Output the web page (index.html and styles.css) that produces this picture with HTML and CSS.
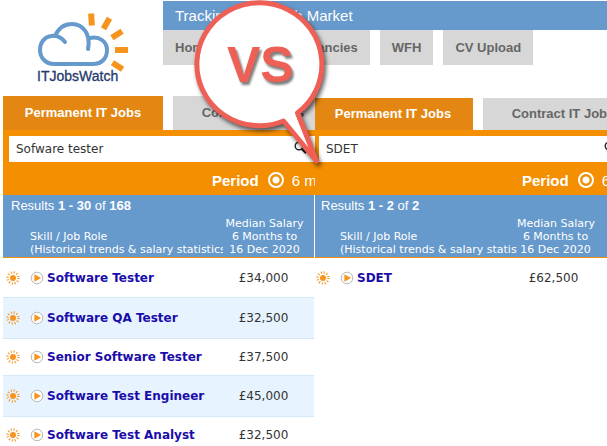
FILE: index.html
```html
<!DOCTYPE html>
<html lang="en">
<head>
    <meta charset="UTF-8">
    <meta name="viewport" content="width=device-width, initial-scale=1.0">
    <title>ITJobsWatch - Software Tester vs SDET</title>
    <link rel="stylesheet" href="styles.css">
</head>
<body>
    <!-- Shared icons -->
    <svg class="icon-defs" aria-hidden="true">
        <symbol id="sun" viewBox="0 0 14 14">
            <circle cx="7" cy="7" r="3" fill="#f7941d"/>
            <circle cx="7" cy="7" r="5.5" fill="none" stroke="#f7941d" stroke-width="2.4" stroke-dasharray="1 1.88"/>
        </symbol>
        <symbol id="play" viewBox="0 0 14 14">
            <circle cx="7" cy="7" r="5.8" fill="#fff" stroke="#b9b9b9" stroke-width="1"/>
            <path d="M4.400 3.200v7.600L11 7z" fill="#f7941d"/>
        </symbol>
        <symbol id="search" viewBox="0 0 14 14">
            <circle cx="5" cy="5" r="3.8" fill="none" stroke="#222" stroke-width="1.4"/>
            <path d="M7.8 7.8l4.4 4.4" stroke="#222" stroke-width="2.4"/>
        </symbol>
    </svg>

    <div class="page">
        <header class="header">
            <a class="logo" href="#" aria-label="ITJobsWatch">
                <svg width="110" height="80" viewBox="30 8 110 80">
                    <g fill="none" stroke="#6699cc" stroke-width="4" stroke-linecap="round">
                        <path d="M65 42C61 37 56 35 51 36C44 37 40 43 40 50C40 58 46 64 54 64H93C102 64 107 58 107 50C107 42 100 36 90 38"/>
                        <path d="M55 36C59 27 65 24 72 24C83 24 91 34 88 49"/>
                    </g>
                    <g fill="#f7941d">
                        <rect x="-3" y="-6" width="6" height="12" transform="translate(91.500 19.500) rotate(-4)"/>
                        <rect x="-3" y="-6" width="6" height="12" transform="translate(106.500 23.500) rotate(30)"/>
                        <rect x="-3" y="-6" width="6" height="12" transform="translate(117 34.500) rotate(58)"/>
                        <rect x="-3" y="-6" width="6" height="13" transform="translate(122 50) rotate(90)"/>
                        <rect x="-3" y="-6" width="6" height="12" transform="translate(117.500 66) rotate(122)"/>
                    </g>
                    <text class="logo-text" x="37" y="81">ITJobsWatch</text>
                </svg>
            </a>
            <div class="header-main">
                <h1 class="tagline">Tracking the IT Job Market</h1>
                <nav class="nav">
                    <a class="nav-link nav-home" href="#">Home</a>
                    <a class="nav-link" href="#">IT Job Vacancies</a>
                    <a class="nav-link" href="#">WFH</a>
                    <a class="nav-link" href="#">CV Upload</a>
                </nav>
            </div>
        </header>

        <main class="compare">
            <section class="pane">
                <div class="pane-inner">
                    <nav class="tabs">
                        <a class="tab active" href="#">Permanent IT Jobs</a>
                        <a class="tab" href="#">Contract IT Jobs</a>
                    </nav>
                    <form class="search">
                        <div class="search-box">
                            <input class="search-input" type="text" value="Sofware tester" aria-label="Search">
                            <button class="search-btn" type="button" aria-label="Go"><svg width="14" height="14"><use href="#search"/></svg></button>
                        </div>
                        <div class="period">
                            <b>Period</b>
                            <label class="period-option"><input class="radio" type="radio" name="period" checked>6 months</label>
                        </div>
                    </form>
                    <div class="results">
                        <p class="results-count">Results <b>1 - 30</b> of <b>168</b></p>
                        <table class="jobs">
                            <thead>
                                <tr>
                                    <th class="skill">Skill / Job Role<br>(Historical trends &amp; salary statistics)</th>
                                    <th class="salary">Median Salary<br>6 Months to<br>16 Dec 2020</th>
                                </tr>
                            </thead>
                            <tbody>
                                <tr>
                                    <td class="skill"><div class="role"><svg class="sun"><use href="#sun"/></svg><svg class="play"><use href="#play"/></svg><a href="#">Software Tester</a></div></td>
                                    <td class="salary">£34,000</td>
                                </tr>
                                <tr>
                                    <td class="skill"><div class="role"><svg class="sun"><use href="#sun"/></svg><svg class="play"><use href="#play"/></svg><a href="#">Software QA Tester</a></div></td>
                                    <td class="salary">£32,500</td>
                                </tr>
                                <tr>
                                    <td class="skill"><div class="role"><svg class="sun"><use href="#sun"/></svg><svg class="play"><use href="#play"/></svg><a href="#">Senior Software Tester</a></div></td>
                                    <td class="salary">£37,500</td>
                                </tr>
                                <tr>
                                    <td class="skill"><div class="role"><svg class="sun"><use href="#sun"/></svg><svg class="play"><use href="#play"/></svg><a href="#">Software Test Engineer</a></div></td>
                                    <td class="salary">£45,000</td>
                                </tr>
                                <tr>
                                    <td class="skill"><div class="role"><svg class="sun"><use href="#sun"/></svg><svg class="play"><use href="#play"/></svg><a href="#">Software Test Analyst</a></div></td>
                                    <td class="salary">£32,500</td>
                                </tr>
                            </tbody>
                        </table>
                    </div>
                </div>
            </section>

            <section class="pane pane-right">
                <div class="pane-inner">
                    <nav class="tabs">
                        <a class="tab active" href="#">Permanent IT Jobs</a>
                        <a class="tab" href="#">Contract IT Jobs</a>
                    </nav>
                    <form class="search">
                        <div class="search-box">
                            <input class="search-input" type="text" value="SDET" aria-label="Search">
                            <button class="search-btn" type="button" aria-label="Go"><svg width="14" height="14"><use href="#search"/></svg></button>
                        </div>
                        <div class="period">
                            <b>Period</b>
                            <label class="period-option"><input class="radio" type="radio" name="period" checked>6 months</label>
                        </div>
                    </form>
                    <div class="results">
                        <p class="results-count">Results <b>1 - 2</b> of <b>2</b></p>
                        <table class="jobs">
                            <thead>
                                <tr>
                                    <th class="skill">Skill / Job Role<br>(Historical trends &amp; salary statistics)</th>
                                    <th class="salary">Median Salary<br>6 Months to<br>16 Dec 2020</th>
                                </tr>
                            </thead>
                            <tbody>
                                <tr>
                                    <td class="skill"><div class="role"><svg class="sun"><use href="#sun"/></svg><svg class="play"><use href="#play"/></svg><a href="#">SDET</a></div></td>
                                    <td class="salary">£62,500</td>
                                </tr>
                            </tbody>
                        </table>
                    </div>
                </div>
            </section>
        </main>

        <!-- Speech bubble over both panes -->
        <svg class="bubble" width="140" height="176" viewBox="190 -4 140 176">
            <path class="bubble-shape" d="M283.500 121A62.500 61.500 0 1 1 297.500 113L316.500 161Z"/>
            <text class="bubble-text" x="227" y="82">VS</text>
        </svg>
    </div>
</body>
</html>
```
FILE: styles.css
```css
:root {
    --blue: #6699cc;
    --orange: #f38f00;
    --tab-orange: #e38612;
    --grey: #d7d7d7;
    --grey-text: #666;
    --link: #1a0dab;
    --stripe: #e7f3fe;
    --red: #ee6055;
    --font-main: "Liberation Sans", Arial, sans-serif;
    --font-data: "DejaVu Sans", Verdana, sans-serif;
}

* {
    margin: 0;
    padding: 0;
    box-sizing: border-box;
}

body {
    height: 100vh;
    overflow: hidden;
    background: #fff;
    color: #333;
    font-family: var(--font-main);
    font-size: 13px;
}

a {
    text-decoration: none;
}

.icon-defs {
    display: none;
}

.page {
    position: relative;
    padding: 1px 0 0 3px;
}

/* Header */
.header {
    display: flex;
    height: 95px;
}

.logo {
    flex: 0 0 160px;
    padding: 7px 0 0 27px;
}

.logo-text {
    font-size: 14px;
    fill: #253a6e;
    stroke: #253a6e;
    stroke-width: 0.3px;
}

.header-main {
    flex: 1;
    min-width: 0;
}

.tagline {
    padding-left: 12px;
    background: var(--blue);
    color: #fff;
    font-size: 15px;
    font-weight: normal;
    line-height: 29px;
    white-space: nowrap;
}

.nav {
    display: flex;
    gap: 10px;
}

.nav-link {
    padding: 0 12px;
    background: var(--grey);
    color: var(--grey-text);
    font-weight: bold;
    line-height: 35px;
    white-space: nowrap;
}

.nav-home {
    min-width: 68px;
}

/* Side by side searches */
.compare {
    display: grid;
    grid-template-columns: 312px minmax(0, 1fr);
}

.pane {
    overflow: hidden;
}

.pane-inner {
    min-width: 312px;
}

.pane-right .pane-inner {
    margin-left: -2px;
}

.tabs {
    display: flex;
    gap: 10px;
}

.tab {
    flex: 0 0 160px;
    background: var(--grey);
    color: var(--grey-text);
    font-weight: bold;
    line-height: 34px;
    text-align: center;
    white-space: nowrap;
}

.tab.active {
    background: var(--tab-orange);
    color: #fff;
}

.pane-right .tabs {
    padding-top: 2px;
}

.pane-right .tab {
    line-height: 32px;
}

.search {
    padding: 6px 0 0 6px;
    background: var(--orange);
}

.search-box {
    display: flex;
    height: 26px;
    background: #fff;
}

.search-input {
    flex: 1;
    min-width: 0;
    padding: 0 7px;
    border: none;
    background: none;
    color: #333;
    font-family: var(--font-data);
    font-size: 12px;
}

.search-btn {
    flex: 0 0 21px;
    border: none;
    background: none;
    text-align: left;
}

.period {
    display: flex;
    align-items: center;
    gap: 9px;
    height: 33px;
    padding: 3px 0 0 203px;
    color: #fff;
    font-size: 15px;
    white-space: nowrap;
}

.period-option {
    display: flex;
    align-items: center;
    gap: 8px;
}

.radio {
    appearance: none;
    flex: 0 0 16px;
    height: 16px;
    border: 2px solid #fff;
    border-radius: 50%;
    background: radial-gradient(circle, #fff 3px, transparent 4px);
}

/* Results */
.results {
    background: #fff;
    border-right: 1px solid #fff;
}

.results-count {
    padding-left: 8px;
    background: var(--blue);
    color: #fff;
    line-height: 21px;
}

.jobs {
    width: 100%;
    table-layout: fixed;
    border-collapse: collapse;
    font-family: var(--font-data);
    font-size: 12px;
}

.jobs th {
    padding: 1px 0;
    border-bottom: 1px solid var(--orange);
    background: var(--blue);
    color: #fff;
    font-size: 11px;
    font-weight: normal;
    line-height: 13px;
    vertical-align: bottom;
    white-space: nowrap;
    overflow: hidden;
}

.jobs tbody tr {
    height: 37px;
}

.jobs tbody tr:first-child {
    height: 40px;
}

.jobs tbody tr:nth-child(even) {
    height: 41px;
    background: var(--stripe);
    border-top: 1px solid #d3e8f9;
    border-bottom: 1px solid #d3e8f9;
}

.jobs .skill {
    width: 220px;
    text-align: left;
}

.jobs th.skill {
    padding-left: 27px;
}

.jobs .salary {
    padding-right: 8px;
    text-align: center;
}

.jobs td.salary {
    padding-right: 10px;
}

.pane-right .jobs .skill {
    width: 204px;
}

.pane-right .jobs .salary {
    padding-right: 30px;
}

.pane-right .jobs td.salary {
    padding-right: 34px;
}

.role {
    display: flex;
    align-items: center;
    padding-left: 3px;
}

.role a {
    color: var(--link);
    font-weight: bold;
    white-space: nowrap;
}

.sun,
.play {
    flex: none;
    width: 14px;
    height: 14px;
}

.play {
    margin: 0 3px 0 10px;
}

/* VS bubble */
.bubble {
    position: absolute;
    top: -4px;
    left: 190px;
    overflow: visible;
}

.bubble-shape {
    fill: #fff;
    stroke: var(--red);
    stroke-width: 5px;
    stroke-linejoin: round;
    filter: drop-shadow(2px 3px 2px rgba(0, 0, 0, 0.6));
}

.bubble-text {
    fill: var(--red);
    font-size: 50px;
    font-weight: bold;
    filter: drop-shadow(2px 3px 1px rgba(0, 0, 0, 0.5));
}
```
